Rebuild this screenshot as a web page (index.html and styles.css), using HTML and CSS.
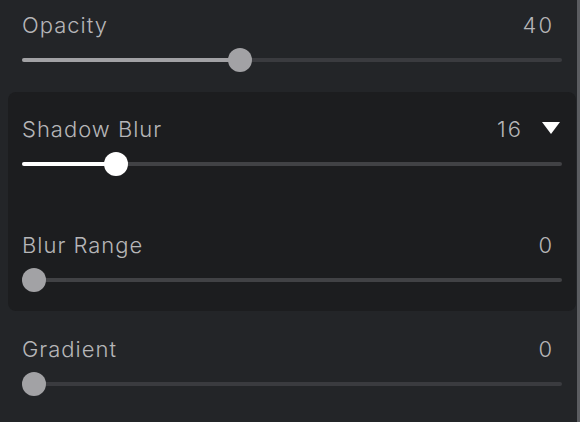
FILE: index.html
```html
<!DOCTYPE html>
<html>
<head>
<meta charset="utf-8">
<link rel="stylesheet" href="styles.css">
</head>
<body>
<div class="app">
  <div class="content">
    <div class="row">
      <div class="head"><span class="label">Opacity</span><span class="value">40</span></div>
      <div class="slider"><div class="track"><div class="fill fill-gray" style="width: 218px"></div></div><div class="thumb thumb-gray" style="left: 206px"></div></div>
    </div>
    <div class="panel">
      <div class="row row-first">
        <div class="head"><span class="label">Shadow Blur</span><span class="value">16</span><span class="caret"></span></div>
        <div class="slider"><div class="track track-panel"><div class="fill fill-white" style="width: 94px"></div></div><div class="thumb thumb-white" style="left: 82px"></div></div>
      </div>
      <div class="row row-second">
        <div class="head"><span class="label">Blur Range</span><span class="value">0</span></div>
        <div class="slider"><div class="track track-panel"></div><div class="thumb thumb-gray" style="left: 0px"></div></div>
      </div>
    </div>
    <div class="row row-last">
      <div class="head"><span class="label">Gradient</span><span class="value">0</span></div>
      <div class="slider"><div class="track"></div><div class="thumb thumb-gray" style="left: 0px"></div></div>
    </div>
  </div>
  <div class="scrollbar"></div>
</div>
</body>
</html>
```
FILE: styles.css
```css
* { box-sizing: border-box; }
html, body { margin: 0; padding: 0; }
body {
  width: 580px;
  height: 422px;
  overflow: hidden;
  background: #232528;
  font-family: Inter, "Noto Sans", sans-serif;
  color: #b6b6b8;
}
.app {
  display: flex;
  height: 422px;
}
.content {
  width: 577px;
  display: flex;
  flex-direction: column;
}
.scrollbar {
  width: 3px;
  background: #5b5d61;
}
.row {
  padding: 13px 15px 0 22px;
}
.head {
  display: flex;
  align-items: center;
  height: 24px;
  font-size: 22px;
  font-weight: 350;
  line-height: 24px;
  letter-spacing: 1px;
}
.label { flex: 1; }
.value { text-align: right; padding-right: 8px; letter-spacing: 2px; }
.caret {
  width: 0;
  height: 0;
  border-left: 9.5px solid transparent;
  border-right: 9.5px solid transparent;
  border-top: 12px solid #ffffff;
  margin-left: 11px;
  margin-right: 2px;
  margin-top: -2px;
}
.slider {
  position: relative;
  height: 24px;
  margin-top: 11px;
}
.track {
  position: absolute;
  left: 0;
  right: 0;
  top: 10px;
  height: 4px;
  border-radius: 2px;
  background: #3a3b3f;
}
.track-panel { background: #414245; }
.fill {
  height: 4px;
  border-radius: 2px;
}
.fill-gray { background: #a2a2a5; }
.fill-white { background: #ffffff; }
.thumb {
  position: absolute;
  top: 0;
  width: 24px;
  height: 24px;
  border-radius: 50%;
}
.thumb-gray { background: #a2a2a5; }
.thumb-white { background: #ffffff; }
.panel {
  margin: 20px 1px 0 8px;
  background: #1c1d1f;
  border-radius: 8px;
  padding-bottom: 19px;
}
.panel .row { padding-left: 14px; padding-right: 14px; }
.panel .row-first { padding-top: 25px; }
.panel .row-second { padding-top: 57px; }
.row-last { padding-top: 26px; }
```
